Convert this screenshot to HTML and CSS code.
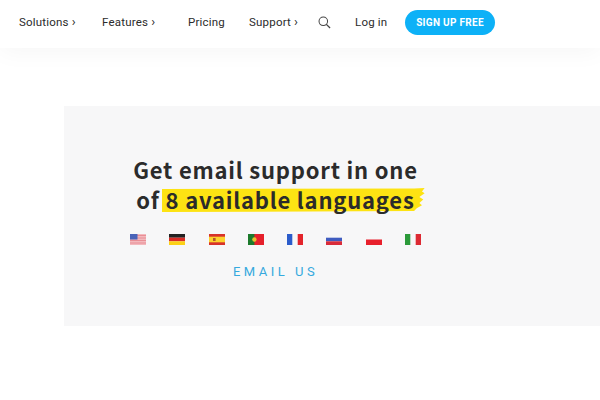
FILE: index.html
```html
<!DOCTYPE html>
<html lang="en">
<head>
<meta charset="utf-8">
<title>Email support</title>
<link rel="stylesheet" href="styles.css">
</head>
<body>
<header class="topbar">
  <nav class="nav">
    <a class="nav-item item-solutions">Solutions <span class="chev">›</span></a>
    <a class="nav-item item-features">Features <span class="chev">›</span></a>
    <a class="nav-item item-pricing">Pricing</a>
    <a class="nav-item item-support">Support <span class="chev">›</span></a>
    <svg class="search" width="13" height="13" viewBox="0 0 14 14" fill="none" stroke="#444" stroke-width="1.1"><circle cx="5.7" cy="5.7" r="4.6"/><path d="M9 9l4 4" stroke-width="1.4"/></svg>
    <a class="nav-item item-login">Log in</a>
    <a class="signup">SIGN UP FREE</a>
  </nav>
</header>
<main class="main">
  <section class="panel">
    <div class="content">
      <h1 class="title">Get email support in one<br>of <span class="mark">8 available languages</span></h1>
      <div class="flags">
        <svg class="flag" viewBox="0 0 16 11"><rect width="16" height="11" fill="#f3b9bd"/><path d="M0 1.5h16M0 4h16M0 6.5h16M0 9h16" stroke="#e88a92" stroke-width=".9"/><rect width="7.5" height="5.5" fill="#4a63b8"/></svg>
        <svg class="flag" viewBox="0 0 16 11"><rect width="16" height="3.7" fill="#222"/><rect y="3.7" width="16" height="3.6" fill="#d92b26"/><rect y="7.3" width="16" height="3.7" fill="#fcd116"/></svg>
        <svg class="flag" viewBox="0 0 16 11"><rect width="16" height="11" fill="#d8332b"/><rect y="2.7" width="16" height="5.6" fill="#fcd32e"/><rect x="4" y="4" width="2.6" height="3" fill="#b5572b"/></svg>
        <svg class="flag" viewBox="0 0 16 11"><rect width="16" height="11" fill="#e5202b"/><rect width="6.4" height="11" fill="#1c7a2c"/><circle cx="6.4" cy="5.5" r="2.2" fill="#e8c02c"/></svg>
        <svg class="flag" viewBox="0 0 16 11"><rect width="16" height="11" fill="#f7f7f8"/><rect width="5.3" height="11" fill="#2b5ccb"/><rect x="10.7" width="5.3" height="11" fill="#e3242b"/></svg>
        <svg class="flag" viewBox="0 0 16 11"><rect width="16" height="3.7" fill="#f7f7f8"/><rect y="3.7" width="16" height="3.6" fill="#3f5cc0"/><rect y="7.3" width="16" height="3.7" fill="#d92b3a"/></svg>
        <svg class="flag" viewBox="0 0 16 11"><rect width="16" height="5.5" fill="#f7f7f8"/><rect y="5.5" width="16" height="5.5" fill="#e8202c"/></svg>
        <svg class="flag" viewBox="0 0 16 11"><rect width="16" height="11" fill="#f7f7f8"/><rect width="5.3" height="11" fill="#2b9a3a"/><rect x="10.7" width="5.3" height="11" fill="#dd2a33"/></svg>
      </div>
      <a class="cta">EMAIL US</a>
    </div>
  </section>
</main>
</body>
</html>
```
FILE: styles.css
```css
* { box-sizing: border-box; }
html, body { margin: 0; padding: 0; }
body { width: 600px; height: 400px; overflow: hidden; background: #fff; font-family: Roboto, sans-serif; }

.topbar { height: 48px; background: #fff; box-shadow: 0 4px 24px rgba(0,0,0,.04); }
.nav { display: flex; align-items: center; height: 44px; padding: 0 0 0 19px; }
.nav-item { font-size: 11.5px; letter-spacing: .2px; color: #2b2b2b; white-space: nowrap; line-height: 44px; }
.chev { display: inline-block; font-size: 13px; }
.item-solutions { width: 83px; }
.item-features { width: 86px; }
.item-pricing { width: 61px; }
.item-support { width: 69px; }
.item-login { margin-left: 24px; width: 50px; }
.search { margin-top: 1px; }
.signup { display: flex; align-items: center; justify-content: center; width: 90px; height: 25px; margin-top: 1px; border-radius: 13px; background: #0db1f7; color: #fff; font-size: 10px; font-weight: 700; letter-spacing: .3px; }

.main { padding: 58px 0 0 64px; }
.panel { height: 220px; background: #f7f7f8; }
.content { width: 423px; padding-top: 48px; display: flex; flex-direction: column; align-items: center; }
.title { margin: 0; text-align: center; font-family: "Noto Sans CJK SC", "Noto Sans", sans-serif; font-size: 22px; line-height: 30px; font-weight: 700; letter-spacing: .8px; color: #2b2b2b; }
.mark { position: relative; display: inline-block; z-index: 0; line-height: 24px; }
.mark::before { content: ""; position: absolute; z-index: -1; left: -4px; top: 1px; bottom: -1px; right: -10px; background: #fde313; clip-path: polygon(0 4%, 96% 2%, 100% 0, 99% 15%, 100% 22%, 98% 38%, 99.5% 48%, 98% 62%, 99% 72%, 97% 84%, 96% 96%, 0 100%); }
.flags { display: flex; justify-content: space-between; width: 291px; margin-top: 20px; }
.flag { display: block; width: 16px; height: 11px; }
.cta { margin-top: 19px; font-size: 13px; letter-spacing: 3.5px; color: #35a9de; line-height: 16px; }
```
